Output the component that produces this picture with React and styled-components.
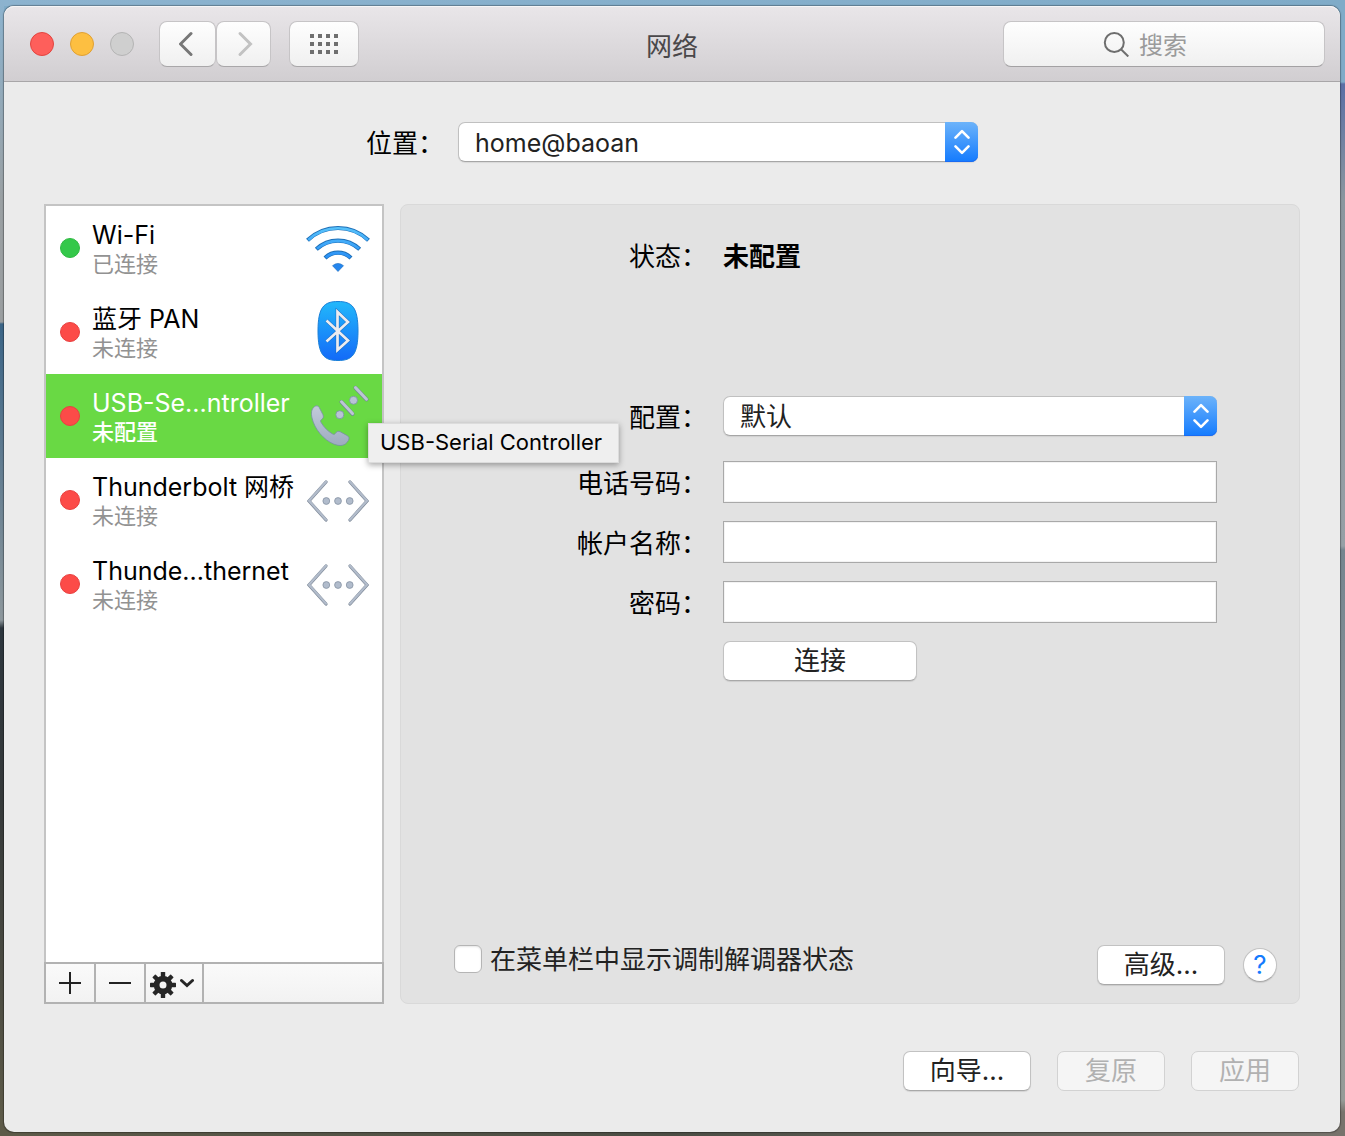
import React, { useState } from "react";
import styled, { createGlobalStyle, css } from "styled-components";

const GlobalStyle = createGlobalStyle`
  *, *::before, *::after { box-sizing: border-box; }
  body { margin: 0; }
  body, button, input, select {
    font-family: Inter, "Noto Sans CJK SC", sans-serif;
    font-size: 26px;
    line-height: 32px;
    color: #000;
  }
`;

const Desktop = styled.div`
  min-height: 100vh;
  display: flex;
  padding: 6px 5px 4px 4px;
  background:
    linear-gradient(#7fabc8 0, #7fabc8 82px, #5a6fa5 84px, #8b979f 200px, #96a0a6 546px, #75858f 550px, #8d979c 800px, #969c98 1100px, #77736c 1112px) right / 5px 100% no-repeat,
    linear-gradient(#8cb3cf 0, #9aa0a3 200px, #9a9ea0 322px, #3b6587 324px, #8d979c 620px, #2d363e 628px, #35393a 800px, #5d5a48 1120px) left / 4px 100% no-repeat,
    linear-gradient(90deg, #8cb3cf, #7fabc8) top / 100% 6px no-repeat,
    linear-gradient(90deg, #5d5a48, #4b4d44 50%, #77736c) bottom / 100% 50% no-repeat,
    #7fabc8;
`;

const Window = styled.main`
  flex: 1;
  min-width: 0;
  display: flex;
  flex-direction: column;
  border-radius: 10px;
  background: #ebebeb;
  box-shadow: 0 0 1px 1px rgba(0, 0, 0, 0.3);
`;

const TitleBar = styled.header`
  display: grid;
  grid-template-columns: 1fr auto 1fr;
  align-items: center;
  height: 76px;
  padding: 0 15px;
  border-radius: 10px 10px 0 0;
  border-bottom: 1px solid #a8a6a8;
  background: linear-gradient(#e9e6e9, #d1ced1);
  box-shadow: inset 0 1px 0 #f6f5f6;
`;

const Title = styled.h1`
  margin: 0;
  padding-top: 6px;
  font-size: 26px;
  line-height: 32px;
  font-weight: 400;
  color: #4a484a;
`;

const Controls = styled.div`
  display: flex;
  align-items: center;
`;

const Lights = styled.div`
  display: flex;
  gap: 16px;
  margin: 0 25px 0 11px;
`;

const Light = styled.button`
  width: 24px;
  height: 24px;
  padding: 0;
  border: 1px solid ${(p) => p.$edge};
  border-radius: 50%;
  background: ${(p) => p.$fill};
`;

const BarButton = styled.button`
  display: grid;
  place-items: center;
  width: ${(p) => p.$width}px;
  height: 46px;
  margin-right: ${(p) => p.$after || 0}px;
  padding: 0;
  border: 1px solid #c6c4c6;
  border-bottom-color: #a9a7a9;
  border-radius: 8px;
  background: linear-gradient(#fefefe, #f0f0f0);
`;

const Search = styled.label`
  justify-self: end;
  display: flex;
  align-items: center;
  justify-content: center;
  gap: 10px;
  width: 322px;
  height: 46px;
  border: 1px solid #c6c4c6;
  border-bottom-color: #a3a1a3;
  border-radius: 8px;
  background: linear-gradient(#fefefe, #f0f0f0);
`;

const SearchInput = styled.input`
  width: 86px;
  padding: 4px 0 0;
  border: 0;
  outline: 0;
  background: none;
  font-size: 24px;
  &::placeholder { color: #9b9b9b; opacity: 1; }
`;

const Content = styled.div`
  flex: 1;
  display: flex;
  flex-direction: column;
  padding: 40px 40px 41px;
`;

const LocationRow = styled.div`
  display: flex;
  align-items: center;
  justify-content: center;
  gap: 14px;
  margin-bottom: 42px;
`;

const SelectBox = styled.div`
  position: relative;
  width: ${(p) => p.$width || "100%"};
`;

const Select = styled.select`
  display: block;
  appearance: none;
  width: 100%;
  height: 40px;
  padding: 2px 48px 0 16px;
  border: 1px solid #c0c0c0;
  border-bottom-color: #a6a6a6;
  border-radius: 7px;
  background: #fff;
  box-shadow: 0 1px 1px rgba(0, 0, 0, 0.08);
  font-size: ${(p) => p.$size || 26}px;
  color: #222;
`;

const SelectCap = styled.span`
  position: absolute;
  top: 0;
  right: 0;
  display: grid;
  place-items: center;
  width: 33px;
  height: 40px;
  border-radius: 0 7px 7px 0;
  background: linear-gradient(#6cb3fa, #147bfe);
  box-shadow: inset 0 -1px 0 #1a6bf2;
  pointer-events: none;
`;

const Panels = styled.div`
  flex: 1;
  display: flex;
  gap: 16px;
  margin-bottom: 47px;
`;

const Sidebar = styled.nav`
  flex: none;
  display: flex;
  flex-direction: column;
  width: 340px;
  border: 2px solid #c4c4c4;
  background: #fff;
`;

const ServiceList = styled.ul`
  flex: 1;
  margin: 0;
  padding: 0;
  list-style: none;
`;

const ServiceItem = styled.li`
  position: relative;
`;

const Service = styled.button`
  display: flex;
  align-items: center;
  width: 100%;
  height: 84px;
  padding: 0 12px 0 14px;
  border: 0;
  text-align: left;
  background: ${(p) => (p.$active ? "#69d944" : "transparent")};
`;

const Dot = styled.span`
  flex: none;
  width: 20px;
  height: 20px;
  margin-right: 12px;
  border: 1px solid ${(p) => (p.$on ? "#2fba42" : "#e8403f")};
  border-radius: 50%;
  background: ${(p) => (p.$on ? "#34c84a" : "#fc4b48")};
`;

const ServiceText = styled.span`
  flex: 1;
  min-width: 0;
  white-space: nowrap;
`;

const ServiceName = styled.span`
  display: block;
  padding-top: 1px;
  font-size: 25px;
  line-height: 32px;
  color: ${(p) => (p.$active ? "#fff" : "#000")};
`;

const ServiceState = styled.span`
  display: block;
  font-size: 22px;
  line-height: 27px;
  color: #929292;
  ${(p) => p.$active && css`
    color: #fff;
    font-weight: 500;
  `}
`;

const Glyph = styled.span`
  flex: none;
  display: grid;
  place-items: center;
  width: 64px;
`;

const Tooltip = styled.span`
  position: absolute;
  z-index: 2;
  top: 49px;
  left: 322px;
  padding: 3px 16px 5px 11px;
  border: 1px solid #dcdcdc;
  background: #efefef;
  box-shadow: 0 2px 6px rgba(0, 0, 0, 0.35);
  font-size: 22px;
  line-height: 30px;
  white-space: nowrap;
`;

const ListTools = styled.div`
  display: flex;
  height: 42px;
  margin: 0 -2px -2px;
  border: 2px solid #b2b2b2;
  background: linear-gradient(#fafafa, #f2f2f2);
`;

const Tool = styled.button`
  display: flex;
  align-items: center;
  justify-content: center;
  gap: 4px;
  width: ${(p) => p.$width}px;
  padding: 0 ${(p) => p.$end || 0}px 0 0;
  border: 0;
  border-right: 2px solid #b2b2b2;
  background: none;
`;

const Details = styled.section`
  flex: 1;
  min-width: 0;
  display: flex;
  flex-direction: column;
  justify-content: space-between;
  padding: 33px 22px 15px 53px;
  border: 1px solid #d9d9d9;
  border-radius: 8px;
  background: #e2e2e2;
`;

const Form = styled.form`
  display: grid;
  grid-template-columns: 1fr 494px;
  column-gap: 16px;
  row-gap: 18px;
  align-items: center;
  padding-right: 60px;
`;

const FieldLabel = styled.label`
  justify-self: end;
  padding-top: 3px;
  white-space: nowrap;
`;

const StatusLabel = styled(FieldLabel)`
  margin-bottom: 105px;
`;

const StatusValue = styled.output`
  margin-bottom: 105px;
  padding-top: 3px;
  font-weight: 700;
`;

const ProfileLabel = styled(FieldLabel)`
  margin-bottom: 7px;
`;

const ProfileField = styled.div`
  margin-bottom: 7px;
`;

const TextField = styled.input`
  width: 100%;
  height: 42px;
  padding: 0 10px;
  border: 1px solid #a9a9a9;
  background: #fff;
  box-shadow: inset 0 0 0 1px #f3f3f3;
`;

const PushButton = styled.button`
  width: ${(p) => p.$width}px;
  height: 40px;
  padding: 0;
  border: 1px solid #c2c2c2;
  border-bottom-color: #a8a8a8;
  border-radius: 7px;
  background: #fff;
  box-shadow: 0 1px 1px rgba(0, 0, 0, 0.1);
  color: #222;
  &:disabled {
    border-color: #d2d2d2;
    background: #f5f5f5;
    box-shadow: none;
    color: #b1b1b1;
  }
`;

const ConnectButton = styled(PushButton)`
  grid-column: 2;
`;

const DetailsFooter = styled.div`
  display: flex;
  align-items: center;
  gap: 18px;
`;

const CheckLabel = styled.label`
  display: flex;
  align-items: center;
  gap: 8px;
  margin: 0 auto 12px 0;
  color: #222;
`;

const CheckText = styled.span`
  padding-top: 2px;
`;

const CheckBox = styled.input`
  appearance: none;
  width: 28px;
  height: 28px;
  margin: 0;
  border: 1px solid #b5b5b5;
  border-radius: 6px;
  background: #fff;
  box-shadow: inset 0 1px 2px rgba(0, 0, 0, 0.1);
  &:checked { background: #147bfe; }
`;

const HelpButton = styled.button`
  width: 34px;
  height: 34px;
  padding: 0;
  border: 1px solid #c2c2c2;
  border-bottom-color: #a8a8a8;
  border-radius: 50%;
  background: #fff;
  box-shadow: 0 1px 1px rgba(0, 0, 0, 0.1);
  color: #147bfe;
`;

const Actions = styled.footer`
  display: flex;
  justify-content: flex-end;
  gap: 26px;
  padding-right: 1px;
`;

function Chevron({ left }) {
  return (
    <svg width="18" height="26" viewBox="0 0 18 26" fill="none" stroke={left ? "#777" : "#c2c2c2"} strokeWidth="3" strokeLinecap="round">
      <path d={left ? "M12 2.500 1.500 13 12 23.500" : "M5 2.500 15.500 13 5 23.500"} />
    </svg>
  );
}

function DotGrid() {
  const cols = [0, 8, 16, 24];
  const rows = [0, 8, 16];
  return (
    <svg width="28" height="20" fill="#6f6f6f">
      {rows.map((y) => cols.map((x) => <rect key={`${x}-${y}`} x={x} y={y} width="4" height="4" />))}
    </svg>
  );
}

function SearchIcon() {
  return (
    <svg width="26" height="26" viewBox="0 0 26 26" fill="none" stroke="#6e6e6e" strokeWidth="2">
      <circle cx="11.300" cy="11.500" r="9.500" />
      <path d="M18 18.200 25.300 25.500" />
    </svg>
  );
}

function UpDown() {
  return (
    <svg width="16" height="26" viewBox="0 0 16 26" fill="none" stroke="#fff" strokeWidth="2.600" strokeLinecap="round" strokeLinejoin="round">
      <path d="M1.500 8.700 8 2.200 14.500 8.700M1.500 17.300 8 23.800 14.500 17.300" />
    </svg>
  );
}

function WifiIcon() {
  return (
    <svg width="64" height="48" viewBox="0 0 64 48">
      <defs>
        <linearGradient id="wifi" x1="0" y1="0" x2="0" y2="48" gradientUnits="userSpaceOnUse">
          <stop offset="0" stopColor="#5cc8fb" />
          <stop offset="1" stopColor="#1478f4" />
        </linearGradient>
      </defs>
      <g fill="none">
        <g stroke="#1d6fb8" strokeWidth="4.200">
          <path d="M1.500 16.300a44 44 0 0 1 61 0M10.300 25.200a31.500 31.500 0 0 1 43.400 0M19 34a18.500 18.500 0 0 1 26 0" />
        </g>
        <g stroke="url(#wifi)" strokeWidth="2.700">
          <path d="M2.200 15.900a44 44 0 0 1 59.600 0M11 24.800a31.500 31.500 0 0 1 42 0M19.700 33.600a18.500 18.500 0 0 1 24.600 0" />
        </g>
      </g>
      <path d="M26.500 41.700q5.500-4.600 11 0L32 47.500z" fill="#2486ee" stroke="#1769bd" strokeWidth=".6" />
    </svg>
  );
}

function BluetoothIcon() {
  return (
    <svg width="42" height="62" viewBox="0 0 42 62">
      <defs>
        <linearGradient id="bt" x1="0" y1="0" x2="0" y2="1">
          <stop offset="0" stopColor="#22b8fb" />
          <stop offset="1" stopColor="#136af8" />
        </linearGradient>
      </defs>
      <path d="M21 .5C35 .5 41 6 41 30S35 59.500 21 59.500 1 54 1 30 7 .500 21 .500z" fill="url(#bt)" stroke="#1a80d8" />
      <path d="M9.500 19.500 31 39.500 20.500 49V11L31 21 9.500 40.500" fill="none" stroke="#1767bd" strokeWidth="3.600" />
      <path d="M9.500 19.500 31 39.500 20.500 49V11L31 21 9.500 40.500" fill="none" stroke="#ececf0" strokeWidth="2.700" />
    </svg>
  );
}

function ModemIcon() {
  return (
    <svg width="64" height="64" viewBox="0 0 64 64">
      <defs>
        <linearGradient id="phone" x1="0" y1="0" x2="0" y2="1">
          <stop offset="0" stopColor="#c3cbda" />
          <stop offset="1" stopColor="#9eabc0" />
        </linearGradient>
      </defs>
      <path d="M8.300 22.800c1.800-1.600 4-1.200 5 .8l3.600 7c1 2.200.4 3.800-1.600 5.200-1 .8-.8 1.700 0 3 2.800 4.600 6.600 8.400 11 11 1.400.8 2.300.8 3-.4 1.400-2 3-2.600 5-1.600l6.600 3.600c2.400 1.200 2.700 3 1.400 5.200-3 5.500-8.400 6-14.600 3.500C17.500 55.800 8.500 45 6 34c-1-4.600-.8-8.800 2.300-11.200z" fill="url(#phone)" stroke="#7690a0" strokeWidth=".8" />
      <g stroke="#708496" strokeWidth="4" strokeLinecap="round">
        <path d="M35.500 18 46.500 29.800M49.500 3.800 60.500 15.400" />
      </g>
      <g stroke="#bcc5d5" strokeWidth="3" strokeLinecap="round">
        <path d="M35.500 17.800 46.500 29.600M49.500 3.600 60.500 15.200" />
      </g>
      <g fill="#b9c3d5" stroke="#7890a2" strokeWidth=".8">
        <circle cx="33.800" cy="30.700" r="4" />
        <circle cx="47.500" cy="16.300" r="4" />
      </g>
    </svg>
  );
}

function BridgeIcon() {
  return (
    <svg width="64" height="46" viewBox="0 0 64 46">
      <g fill="none" strokeLinecap="round" strokeLinejoin="miter">
        <path d="M20 5 3 24 20 43M44 5 61 24 44 43" stroke="#7e8998" strokeWidth="3.200" />
        <path d="M20 4.700 3 23.700 20 42.700M44 4.700 61 23.700 44 42.700" stroke="#b2bccb" strokeWidth="2.200" />
      </g>
      <g fill="#b1bccc" stroke="#8793a3" strokeWidth=".8">
        <circle cx="20.300" cy="24" r="3.400" />
        <circle cx="32" cy="24" r="3.400" />
        <circle cx="43.700" cy="24" r="3.400" />
      </g>
    </svg>
  );
}

function GearIcon() {
  const teeth = [0, 45, 90, 135, 180, 225, 270, 315];
  return (
    <svg width="26" height="30" viewBox="-13 -17 26 30">
      {teeth.map((a) => (
        <rect key={a} x="-2.200" y="-13" width="4.400" height="6" rx=".6" fill="#262626" transform={`rotate(${a})`} />
      ))}
      <circle r="6.400" fill="none" stroke="#262626" strokeWidth="5.800" />
    </svg>
  );
}

const services = [
  { id: "wifi", name: "Wi-Fi", state: "已连接", on: true, Icon: WifiIcon },
  { id: "bluetooth", name: "蓝牙 PAN", state: "未连接", Icon: BluetoothIcon },
  { id: "usb", name: "USB-Se...ntroller", state: "未配置", Icon: ModemIcon, tip: "USB-Serial Controller" },
  { id: "bridge", name: "Thunderbolt 网桥", state: "未连接", Icon: BridgeIcon },
  { id: "ethernet", name: "Thunde...thernet", state: "未连接", Icon: BridgeIcon },
];

export default function App() {
  const [active, setActive] = useState("usb");

  return (
    <Desktop>
      <GlobalStyle />
      <Window>
        <TitleBar>
          <Controls>
            <Lights>
              <Light aria-label="关闭" $fill="#fe5f5b" $edge="#e2443f" />
              <Light aria-label="最小化" $fill="#fdbf41" $edge="#e0a033" />
              <Light aria-label="缩放" $fill="#cfcfcf" $edge="#b4b4b4" />
            </Lights>
            <BarButton aria-label="后退" $width={57}><Chevron left /></BarButton>
            <BarButton aria-label="前进" $width={55} $after={18}><Chevron /></BarButton>
            <BarButton aria-label="显示全部" $width={70}><DotGrid /></BarButton>
          </Controls>
          <Title>网络</Title>
          <Search>
            <SearchIcon />
            <SearchInput type="search" placeholder="搜索" aria-label="搜索" />
          </Search>
        </TitleBar>

        <Content>
          <LocationRow>
            <FieldLabel htmlFor="location">位置：</FieldLabel>
            <SelectBox $width="520px">
              <Select id="location" $size={25}><option>home@baoan</option></Select>
              <SelectCap><UpDown /></SelectCap>
            </SelectBox>
          </LocationRow>

          <Panels>
            <Sidebar>
              <ServiceList>
                {services.map(({ id, name, state, on, Icon, tip }) => (
                  <ServiceItem key={id}>
                    <Service $active={id === active} onClick={() => setActive(id)}>
                      <Dot $on={on} />
                      <ServiceText>
                        <ServiceName $active={id === active}>{name}</ServiceName>
                        <ServiceState $active={id === active}>{state}</ServiceState>
                      </ServiceText>
                      <Glyph><Icon /></Glyph>
                    </Service>
                    {tip && id === active && <Tooltip role="tooltip">{tip}</Tooltip>}
                  </ServiceItem>
                ))}
              </ServiceList>
              <ListTools>
                <Tool aria-label="添加" $width={50}>
                  <svg width="22" height="22" stroke="#222" strokeWidth="2"><path d="M0 11h22M11 0v22" /></svg>
                </Tool>
                <Tool aria-label="移除" $width={50}>
                  <svg width="22" height="22" stroke="#222" strokeWidth="2"><path d="M0 11h22" /></svg>
                </Tool>
                <Tool aria-label="更多操作" $width={58} $end={4}>
                  <GearIcon />
                  <svg width="14" height="10" fill="none" stroke="#262626" strokeWidth="3" strokeLinecap="round"><path d="M1.500 2.500 7 7.500 12.500 2.500" /></svg>
                </Tool>
              </ListTools>
            </Sidebar>

            <Details>
              <Form onSubmit={(e) => e.preventDefault()}>
                <StatusLabel htmlFor="status">状态：</StatusLabel>
                <StatusValue id="status">未配置</StatusValue>
                <ProfileLabel htmlFor="profile">配置：</ProfileLabel>
                <ProfileField>
                  <SelectBox>
                    <Select id="profile"><option>默认</option></Select>
                    <SelectCap><UpDown /></SelectCap>
                  </SelectBox>
                </ProfileField>
                <FieldLabel htmlFor="phone-number">电话号码：</FieldLabel>
                <TextField id="phone-number" type="tel" />
                <FieldLabel htmlFor="account">帐户名称：</FieldLabel>
                <TextField id="account" type="text" />
                <FieldLabel htmlFor="password">密码：</FieldLabel>
                <TextField id="password" type="password" />
                <ConnectButton $width={194} type="submit">连接</ConnectButton>
              </Form>
              <DetailsFooter>
                <CheckLabel>
                  <CheckBox type="checkbox" />
                  <CheckText>在菜单栏中显示调制解调器状态</CheckText>
                </CheckLabel>
                <PushButton $width={128}>高级...</PushButton>
                <HelpButton aria-label="帮助">?</HelpButton>
              </DetailsFooter>
            </Details>
          </Panels>

          <Actions>
            <PushButton $width={128}>向导...</PushButton>
            <PushButton $width={108} disabled>复原</PushButton>
            <PushButton $width={108} disabled>应用</PushButton>
          </Actions>
        </Content>
      </Window>
    </Desktop>
  );
}
